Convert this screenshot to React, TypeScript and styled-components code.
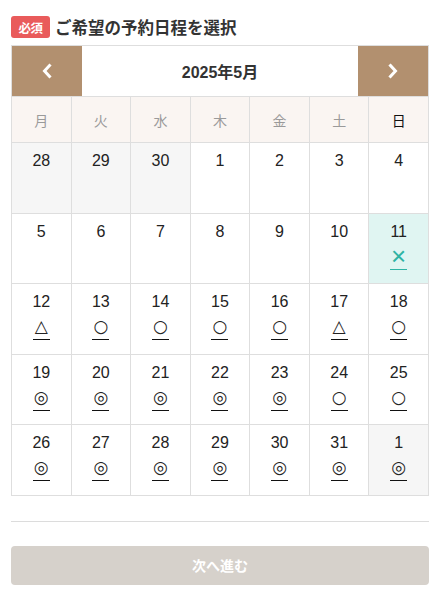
import React from "react";
import styled, { createGlobalStyle } from "styled-components";

const GlobalStyle = createGlobalStyle`
  html, body { margin: 0; padding: 0; background: #fff; }
  body { font-family: "Liberation Sans", Arial, "Noto Sans CJK JP", sans-serif; color: #222; }
  * { box-sizing: border-box; }
`;

const Page = styled.div`
  width: 441px;
  padding: 16px 12px 0 11px;
`;

const TitleRow = styled.div`
  display: flex;
  align-items: center;
  gap: 5px;
  height: 22px;
`;

const Badge = styled.span`
  display: inline-flex;
  align-items: center;
  justify-content: center;
  width: 39px;
  height: 22px;
  border-radius: 3px;
  background: #e95b5b;
  color: #fff;
  font-family: "Noto Sans CJK JP", sans-serif;
  font-weight: 700;
  font-size: 12.5px;
  letter-spacing: -0.5px;
`;

const Title = styled.h2`
  margin: 0;
  font-family: "Noto Sans CJK JP", sans-serif;
  font-weight: 700;
  font-size: 16.5px;
  color: #333;
  line-height: 22px;
`;

const Calendar = styled.div`
  margin-top: 7px;
  border: 1px solid #dedede;
  border-bottom: none;
  border-right: none;
`;

const MonthBar = styled.div`
  display: flex;
  height: 51px;
  border-right: 1px solid #dedede;
  border-bottom: 1px solid #dedede;
`;

const NavButton = styled.button`
  width: 70px;
  height: 100%;
  border: none;
  padding: 0;
  margin: 0;
  background: #b2906f;
  display: flex;
  align-items: center;
  justify-content: center;
  cursor: pointer;
`;

const MonthLabel = styled.div`
  flex: 1;
  display: flex;
  align-items: center;
  justify-content: center;
  font-family: "Liberation Sans", "Noto Sans CJK JP", sans-serif;
  font-weight: 700;
  font-size: 16px;
  color: #333;
`;

const Grid = styled.div`
  display: grid;
  grid-template-columns: repeat(7, 1fr);
  grid-template-rows: 46px repeat(5, 70.6px);
`;

const WeekCell = styled.div<{ $sun?: boolean }>`
  display: flex;
  align-items: center;
  justify-content: center;
  background: #faf5f2;
  border-right: 1px solid #dedede;
  border-bottom: 1px solid #dedede;
  font-family: "Noto Sans CJK JP", sans-serif;
  font-size: 14px;
  color: ${(p) => (p.$sun ? "#111" : "#9a9a9a")};
`;

type Kind = "normal" | "past" | "full";

const DayCell = styled.div<{ $kind: Kind }>`
  display: flex;
  flex-direction: column;
  align-items: center;
  padding-top: 9px;
  border-right: 1px solid #dedede;
  border-bottom: 1px solid #dedede;
  background: ${(p) =>
    p.$kind === "past" ? "#f6f6f6" : p.$kind === "full" ? "#e0f5f2" : "#fff"};
`;

const DayNum = styled.div`
  font-size: 16px;
  line-height: 18px;
  color: #222;
`;

const Mark = styled.span<{ $teal?: boolean; $size: number; $font: string }>`
  margin-top: 2px;
  display: flex;
  align-items: center;
  justify-content: center;
  width: 17px;
  height: 27px;
  border-bottom: 1px solid ${(p) => (p.$teal ? "#2fb3a4" : "#111")};
  color: ${(p) => (p.$teal ? "#2fb3a4" : "#222")};
  font-family: ${(p) => p.$font}, sans-serif;
  font-size: ${(p) => p.$size}px;
  line-height: 26px;
  cursor: pointer;
`;

const Divider = styled.hr`
  margin: 25px 0 0 0;
  border: none;
  border-top: 1px solid #dcdcdc;
`;

const NextButton = styled.button`
  margin-top: 24px;
  width: 100%;
  height: 39px;
  border: none;
  border-radius: 4px;
  background: #d6d1cb;
  color: #fff;
  font-family: "Noto Sans CJK JP", sans-serif;
  font-weight: 700;
  font-size: 14px;
`;

const Chevron = ({ dir }: { dir: "left" | "right" }) => (
  <svg width="12" height="16" viewBox="0 0 12 16">
    <polyline
      points={dir === "left" ? "8.5,2.5 3.5,8 8.5,13.5" : "3.5,2.5 8.5,8 3.5,13.5"}
      fill="none"
      stroke="#fff"
      strokeWidth="3"
      strokeLinecap="square"
      strokeLinejoin="miter"
    />
  </svg>
);

type Day = { n: number; kind: Kind; mark?: string };

const marks: Record<string, { size: number; font: string }> = {
  "○": { size: 17, font: '"DejaVu Sans"' },
  "△": { size: 17, font: '"DejaVu Sans"' },
  "◎": { size: 17, font: '"DejaVu Sans"' },
  "×": { size: 26, font: '"Liberation Sans"' },
};

const days: Day[] = [
  { n: 28, kind: "past" }, { n: 29, kind: "past" }, { n: 30, kind: "past" },
  { n: 1, kind: "normal" }, { n: 2, kind: "normal" }, { n: 3, kind: "normal" }, { n: 4, kind: "normal" },
  { n: 5, kind: "normal" }, { n: 6, kind: "normal" }, { n: 7, kind: "normal" }, { n: 8, kind: "normal" },
  { n: 9, kind: "normal" }, { n: 10, kind: "normal" }, { n: 11, kind: "full", mark: "×" },
  { n: 12, kind: "normal", mark: "△" }, { n: 13, kind: "normal", mark: "○" }, { n: 14, kind: "normal", mark: "○" },
  { n: 15, kind: "normal", mark: "○" }, { n: 16, kind: "normal", mark: "○" }, { n: 17, kind: "normal", mark: "△" },
  { n: 18, kind: "normal", mark: "○" },
  { n: 19, kind: "normal", mark: "◎" }, { n: 20, kind: "normal", mark: "◎" }, { n: 21, kind: "normal", mark: "◎" },
  { n: 22, kind: "normal", mark: "◎" }, { n: 23, kind: "normal", mark: "◎" }, { n: 24, kind: "normal", mark: "○" },
  { n: 25, kind: "normal", mark: "○" },
  { n: 26, kind: "normal", mark: "◎" }, { n: 27, kind: "normal", mark: "◎" }, { n: 28, kind: "normal", mark: "◎" },
  { n: 29, kind: "normal", mark: "◎" }, { n: 30, kind: "normal", mark: "◎" }, { n: 31, kind: "normal", mark: "◎" },
  { n: 1, kind: "past", mark: "◎" },
];

const weekdays = ["月", "火", "水", "木", "金", "土", "日"];

export default function App() {
  return (
    <>
      <GlobalStyle />
      <Page>
        <TitleRow>
          <Badge>必須</Badge>
          <Title>ご希望の予約日程を選択</Title>
        </TitleRow>
        <Calendar>
          <MonthBar>
            <NavButton aria-label="前の月"><Chevron dir="left" /></NavButton>
            <MonthLabel>2025年5月</MonthLabel>
            <NavButton aria-label="次の月"><Chevron dir="right" /></NavButton>
          </MonthBar>
          <Grid>
            {weekdays.map((w, i) => (
              <WeekCell key={w} $sun={i === 6}>{w}</WeekCell>
            ))}
            {days.map((d, i) => (
              <DayCell key={i} $kind={d.kind}>
                <DayNum>{d.n}</DayNum>
                {d.mark && (
                  <Mark
                    $teal={d.mark === "×"}
                    $size={marks[d.mark].size}
                    $font={marks[d.mark].font}
                  >
                    {d.mark}
                  </Mark>
                )}
              </DayCell>
            ))}
          </Grid>
        </Calendar>
        <Divider />
        <NextButton disabled>次へ進む</NextButton>
      </Page>
    </>
  );
}
